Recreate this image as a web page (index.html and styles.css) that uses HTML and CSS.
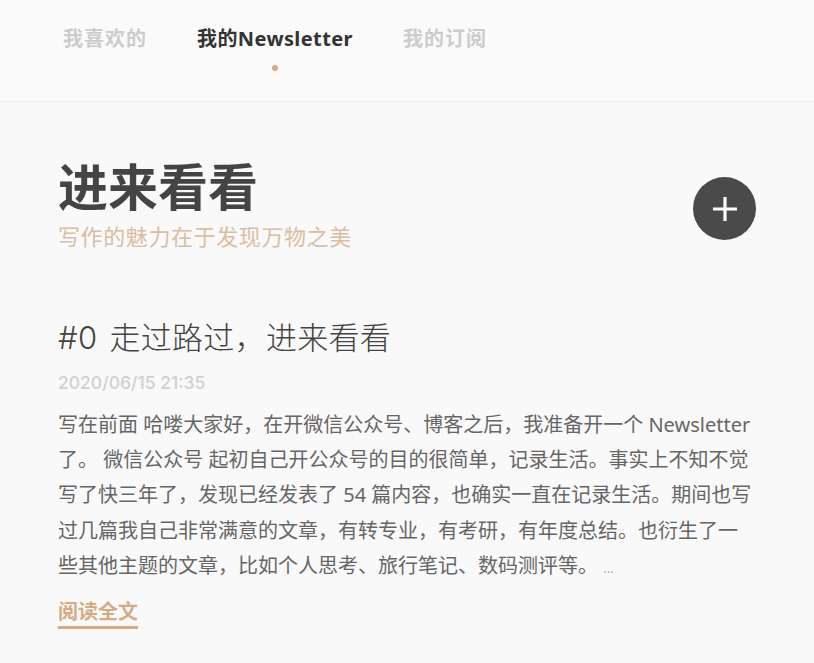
FILE: index.html
```html
<!DOCTYPE html>
<html lang="zh">
<head>
<meta charset="utf-8">
<title>我的Newsletter</title>
<link rel="stylesheet" href="styles.css">
</head>
<body>
<header class="topbar">
  <nav class="tabs">
    <a class="tab">我喜欢的</a>
    <a class="tab active">我的Newsletter</a>
    <a class="tab">我的订阅</a>
  </nav>
</header>
<main class="content">
  <section class="hero">
    <div class="hero-text">
      <h1 class="hero-title">进来看看</h1>
      <p class="hero-sub">写作的魅力在于发现万物之美</p>
    </div>
    <button class="add-btn" aria-label="新建">
      <svg width="28" height="28" viewBox="0 0 28 28"><path d="M14 2v24M2 14h24" stroke="#fff" stroke-width="3.2" fill="none"/></svg>
    </button>
  </section>
  <article class="post">
    <h2 class="post-title">#0 走过路过，进来看看</h2>
    <div class="post-date">2020/06/15 21:35</div>
    <p class="post-body">写在前面 哈喽大家好，在开微信公众号、博客之后，我准备开一个 Newsletter 了。 微信公众号 起初自己开公众号的目的很简单，记录生活。事实上不知不觉写了快三年了，发现已经发表了 54 篇内容，也确实一直在记录生活。期间也写过几篇我自己非常满意的文章，有转专业，有考研，有年度总结。也衍生了一些其他主题的文章，比如个人思考、旅行笔记、数码测评等。 <span class="more">...</span></p>
    <div class="read-row"><a class="read-more">阅读全文</a></div>
  </article>
</main>
</body>
</html>
```
FILE: styles.css
```css
html, body {
  margin: 0;
  padding: 0;
}
body {
  background: #f9f9f9;
  font-family: "Noto Sans", "Noto Sans CJK SC", sans-serif;
  color: #444;
}
.topbar {
  background: #fafafa;
  border-bottom: 1px solid #ececec;
  height: 102px;
  box-sizing: border-box;
}
.tabs {
  display: flex;
  gap: 50px;
  padding: 24px 0 0 63px;
}
.tab {
  position: relative;
  font-size: 20px;
  font-weight: 700;
  letter-spacing: 1px;
  color: #cccccc;
  line-height: 30px;
}
.tab.active {
  color: #333;
  letter-spacing: 0.4px;
}
.tab.active::after {
  content: "";
  position: absolute;
  left: 50%;
  top: 41px;
  width: 6px;
  height: 6px;
  margin-left: -3px;
  border-radius: 50%;
  background: #d4aa85;
}
.content {
  padding: 0 58px;
}
.hero {
  display: flex;
  align-items: center;
  justify-content: space-between;
  padding-top: 52px;
}
.hero-title {
  margin: 0;
  font-size: 50px;
  font-weight: 700;
  line-height: 66px;
  color: #444;
}
.hero-sub {
  margin: 0;
  font-size: 22px;
  line-height: 32px;
  color: #d9bea3;
  letter-spacing: 0.6px;
}
.add-btn {
  width: 63px;
  height: 63px;
  border-radius: 50%;
  border: none;
  background: #4a4a4a;
  display: flex;
  align-items: center;
  justify-content: center;
  padding: 0;
  margin-top: 11px;
}
.post {
  padding-top: 66px;
}
.post-title {
  margin: 0;
  font-family: "Inter", "Noto Sans CJK SC", sans-serif;
  font-size: 31px;
  font-weight: 300;
  line-height: 40px;
  letter-spacing: 0.3px;
  word-spacing: 3px;
  color: #444;
}
.post-date {
  margin-top: 15px;
  font-family: "Inter", sans-serif;
  font-size: 17.5px;
  font-weight: 500;
  color: #d0d0d0;
  line-height: 20px;
}
.post-body {
  margin: 14px 0 0;
  font-size: 20px;
  line-height: 35.2px;
  letter-spacing: 0;
  color: #666;
}
.more {
  color: #aaa;
  font-size: 13px;
}
.read-row {
  margin-top: 12px;
}
.read-more {
  display: inline-block;
  font-size: 20px;
  font-weight: 700;
  color: #d5ab86;
  border-bottom: 3px solid #d5ab86;
  line-height: 28px;
}
```
